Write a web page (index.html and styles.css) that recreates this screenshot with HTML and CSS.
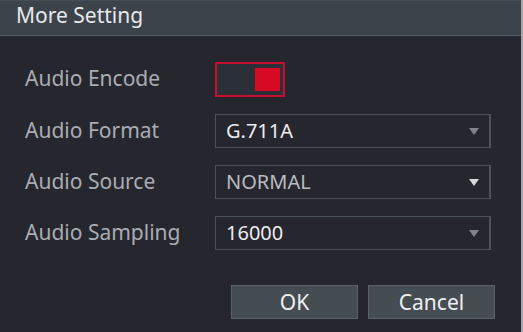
FILE: index.html
```html
<!DOCTYPE html>
<html>
<head>
<title>More Setting</title>
<link rel="stylesheet" href="styles.css">
</head>
<body>
<div class="dialog">
  <div class="title-bar">More Setting</div>
  <div class="content">
    <div class="row">
      <span class="label">Audio Encode</span>
      <div class="toggle"><span class="knob"></span></div>
    </div>
    <div class="row">
      <span class="label">Audio Format</span>
      <div class="select"><span class="value">G.711A</span><span class="arrow dim"></span></div>
    </div>
    <div class="row">
      <span class="label">Audio Source</span>
      <div class="select"><span class="value soft">NORMAL</span><span class="arrow"></span></div>
    </div>
    <div class="row">
      <span class="label">Audio Sampling</span>
      <div class="select"><span class="value">16000</span><span class="arrow dim"></span></div>
    </div>
    <div class="buttons">
      <button class="btn">OK</button>
      <button class="btn">Cancel</button>
    </div>
  </div>
</div>
</body>
</html>
```

FILE: styles.css
```css
body {
margin: 0;
background-color: #a4a6ac;
font-family: "Noto Sans", "Open Sans", sans-serif;
}

.dialog {
width: 521px;
height: 332px;
background-color: #26262e;
display: flex;
flex-direction: column;
}

.title-bar {
height: 36px;
box-sizing: border-box;
border-top: 1px solid #454d55;
border-bottom: 1px solid #565d64;
background-color: #3c434a;
color: #e8e9ea;
font-size: 21px;
line-height: 28px;
padding-left: 16px;
}

.content {
padding: 26px 0 0 25px;
display: flex;
flex-direction: column;
gap: 17px;
}

.row {
display: flex;
align-items: center;
}

.label {
width: 190px;
color: #a9adb2;
font-size: 21px;
line-height: 28px;
margin-top: -3px;
}

.toggle {
width: 70px;
height: 35px;
box-sizing: border-box;
border: 2px solid #c8102e;
padding: 4px 3px;
display: flex;
justify-content: flex-end;
background-color: #2b2f38;
}

.knob {
width: 25px;
height: 23px;
background-color: #d90a26;
}

.select {
width: 276px;
height: 34px;
box-sizing: border-box;
border: 1px solid #4c525a;
border-right-width: 2px;
display: flex;
align-items: center;
justify-content: space-between;
padding: 0 10px 0 10px;
}

.value {
color: #eceded;
font-size: 20px;
line-height: 26px;
}

.value.soft {
color: #b9bcc0;
}

.arrow {
width: 0;
height: 0;
border-left: 5px solid transparent;
border-right: 5px solid transparent;
border-top: 7px solid #d6d8da;
}

.arrow.dim {
border-top-color: #7f848a;
}

.buttons {
display: flex;
gap: 10px;
padding-left: 206px;
margin-top: 18px;
}

.btn {
width: 127px;
height: 34px;
box-sizing: border-box;
border: 1px solid #5a6268;
background-color: #454c52;
color: #eeeeef;
font-family: "Noto Sans", "Open Sans", sans-serif;
font-size: 21px;
line-height: 28px;
padding: 0;
}
```
